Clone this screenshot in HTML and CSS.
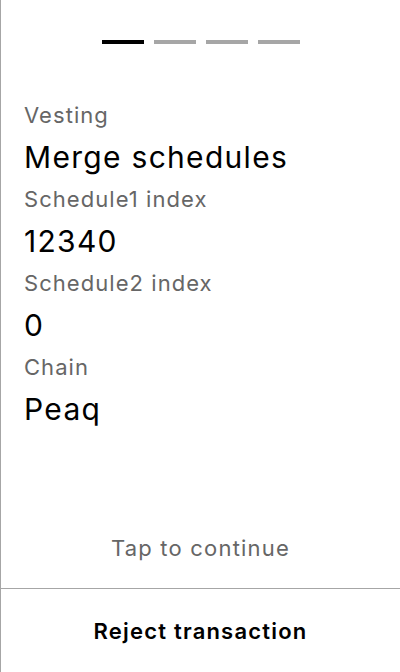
FILE: index.html
```html
<!DOCTYPE html>
<html>
<head>
<meta charset="utf-8">
<link rel="stylesheet" href="styles.css">
</head>
<body>
<div class="screen">
  <div class="main">
    <div class="progress">
      <span class="seg seg-active"></span>
      <span class="seg"></span>
      <span class="seg"></span>
      <span class="seg"></span>
    </div>
    <div class="fields">
      <div class="label">Vesting</div>
      <div class="value">Merge schedules</div>
      <div class="label">Schedule1 index</div>
      <div class="value">12340</div>
      <div class="label">Schedule2 index</div>
      <div class="value">0</div>
      <div class="label">Chain</div>
      <div class="value">Peaq</div>
    </div>
    <div class="tap">Tap to continue</div>
  </div>
  <div class="footer">Reject transaction</div>
</div>
</body>
</html>
```

FILE: styles.css
```css
html, body {
  margin: 0;
  padding: 0;
  background: #fff;
}
body {
  font-family: Inter, "Noto Sans", sans-serif;
  color: #000;
}
.screen {
  width: 400px;
  height: 672px;
  box-sizing: border-box;
  border-left: 1px solid #a6a6a6;
  display: flex;
  flex-direction: column;
}
.main {
  flex: 1;
  display: flex;
  flex-direction: column;
}
.progress {
  display: flex;
  justify-content: center;
  gap: 10px;
  padding-top: 40px;
}
.seg {
  width: 42px;
  height: 4px;
  background: #a6a6a6;
}
.seg-active {
  background: #000;
}
.fields {
  padding: 51px 23px 0;
  display: flex;
  flex-direction: column;
}
.label {
  font-size: 22px;
  line-height: 40px;
  letter-spacing: 1.05px;
  color: #666;
}
.value {
  font-size: 30px;
  line-height: 44px;
  letter-spacing: 1.3px;
  color: #000;
}
.tap {
  margin-top: auto;
  text-align: center;
  font-size: 22px;
  letter-spacing: 1.2px;
  color: #666;
  padding-bottom: 27px;
}
.footer {
  height: 83px;
  border-top: 1px solid #a6a6a6;
  display: flex;
  align-items: center;
  justify-content: center;
  font-size: 22px;
  letter-spacing: 1.2px;
  font-weight: 600;
}
```
